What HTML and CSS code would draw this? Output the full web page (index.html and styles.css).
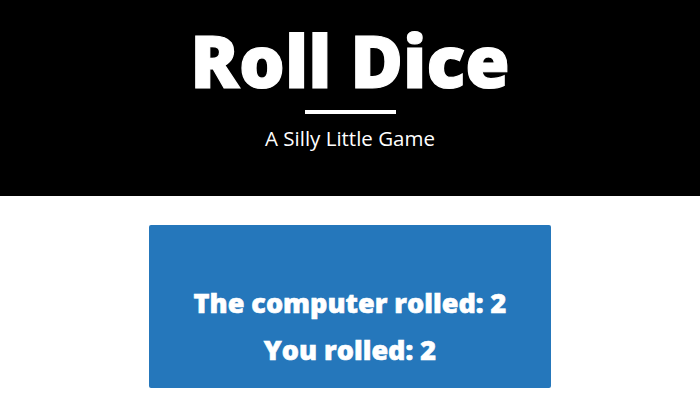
FILE: index.html
```html
<!DOCTYPE html>
<html>
<head>
<meta charset="utf-8">
<link rel="stylesheet" href="styles.css">
</head>
<body>
<header class="hero">
  <h1 class="title">Roll Dice</h1>
  <hr class="rule">
  <p class="subtitle">A Silly Little Game</p>
</header>
<main class="content">
  <section class="result">
    <p class="line">The computer rolled: 2</p>
    <p class="line">You rolled: 2</p>
  </section>
</main>
</body>
</html>
```
FILE: styles.css
```css
html, body {
  margin: 0;
  padding: 0;
  background: #fff;
  font-family: "Open Sans", "Liberation Sans", sans-serif;
}
.hero {
  background: #000;
  color: #fff;
  height: 196px;
  display: flex;
  flex-direction: column;
  align-items: center;
  box-sizing: border-box;
  padding-top: 14px;
}
.title {
  margin: 0;
  font-size: 72px;
  font-weight: 800;
  line-height: 92px;
  -webkit-text-stroke: 1.2px #fff;
}
.rule {
  width: 91px;
  height: 4px;
  border: 0;
  background: #fff;
  margin: 4px 0 0;
}
.subtitle {
  margin: 10px 0 0;
  font-size: 20.5px;
  line-height: 28px;
}
.content {
  display: flex;
  justify-content: center;
  padding-top: 29px;
}
.result {
  width: 402px;
  height: 163px;
  box-sizing: border-box;
  background: #2577bb;
  border-radius: 2px;
  color: #fff;
  display: flex;
  flex-direction: column;
  align-items: center;
  padding-top: 54px;
}
.line {
  margin: 0;
  font-size: 27px;
  font-weight: 800;
  line-height: 47px;
  -webkit-text-stroke: 0.6px #fff;
}
```
